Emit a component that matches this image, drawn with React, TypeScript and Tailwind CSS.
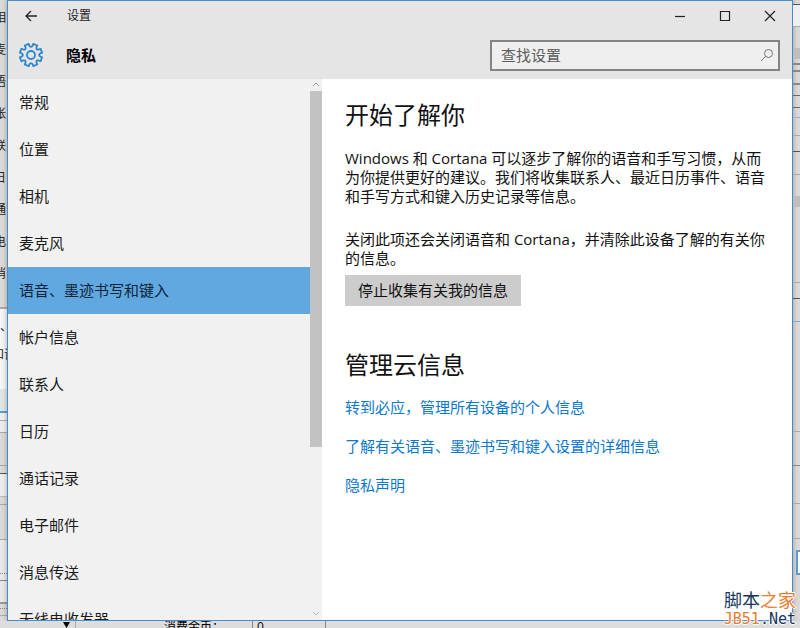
const navItems = [
  '常规',
  '位置',
  '相机',
  '麦克风',
  '语音、墨迹书写和键入',
  '帐户信息',
  '联系人',
  '日历',
  '通话记录',
  '电子邮件',
  '消息传送',
  '无线电收发器',
]

const links = [
  '转到必应，管理所有设备的个人信息',
  '了解有关语音、墨迹书写和键入设置的详细信息',
  '隐私声明',
]

const behindLabels = ['相', '麦', '语', '帐', '联', '日', '通', '电', '消']

// Rows of the window behind, visible on the left edge
const behindRowsLeft = [
  { id: 1, className: 'h-6 border-b-2 border-[#5b9bd5] bg-[#e2e5e5]' },
  { id: 2, className: 'h-2 border-b border-[#aaa] bg-[#eee]' },
  { id: 3, className: 'h-3 border-b border-[#aaa] bg-[#eee]' },
  { id: 4, className: 'h-[33px] border-b border-[#aaa]' },
  { id: 5, className: 'h-2 border-b border-[#555]' },
  { id: 6, className: 'h-[23px] border-b border-[#bbb] bg-[#eee]' },
  { id: 7, className: 'h-2 border-b border-[#aaa]' },
  { id: 8, className: 'h-[35px] border-b border-[#aaa]' },
  { id: 9, className: 'h-[34px] border-b border-dotted border-[#888] bg-[#e9e9e9]' },
  { id: 10, className: 'h-[7px] border-b border-[#888] bg-[#e9e9e9]' },
  { id: 11, className: 'h-[23px] border-b-2 border-[#999] bg-[#e9e9e9]' },
  { id: 12, className: 'h-[5px] border-b border-dotted border-[#888]' },
  { id: 13, className: 'h-[7px] border-b border-[#aaa]' },
]

// Rows of the window behind, visible on the right edge
const behindRows = [
  { id: 1, className: 'h-[5px] border-b border-[#555]' },
  { id: 2, className: 'h-[22px] border-b border-[#aaa] bg-[#eef0f4]' },
  { id: 3, className: 'h-[21px]' },
  { id: 4, className: 'h-[11px] bg-[#bebebe]' },
  { id: 5, className: 'h-[6px] border-b-2 border-[#888]' },
  { id: 6, className: 'h-[7px] border-b-2 border-[#888]' },
  { id: 7, className: 'h-[13px] border-b-2 border-[#888]' },
  { id: 8, className: 'h-[11px] border-b border-[#666]' },
  { id: 9, className: 'h-3 border-b border-[#666]' },
  { id: 10, className: 'h-[10px] border-b border-[#9ab4d0]' },
  { id: 11, className: 'h-[18px] border-b border-[#aaa]' },
  { id: 12, className: 'h-4 border-b border-[#555]' },
  { id: 13, className: 'h-[23px] border-b border-[#aaa]' },
  { id: 14, className: 'h-[21px]' },
  { id: 15, className: 'h-[11px] bg-[#bebebe]' },
  { id: 16, className: 'h-[76px] border-b border-[#aaa]' },
  { id: 17, className: 'h-4 border-b border-[#555]' },
  { id: 18, className: 'h-[23px] border-b border-[#8aa8c8]' },
  { id: 19, className: 'h-[110px] border-b border-[#aaa]' },
  { id: 20, className: 'h-[34px] border-b border-[#888]' },
  { id: 21, className: 'h-[38px] border-b border-[#aaa]' },
  { id: 22, className: 'h-[35px] border-b border-[#aaa]' },
]

function GearIcon() {
  const teeth = [0, 45, 90, 135, 180, 225, 270, 315]
  const point = (radius: number, deg: number) => {
    const a = (deg * Math.PI) / 180
    return `${(13 + radius * Math.sin(a)).toFixed(2)} ${(13 - radius * Math.cos(a)).toFixed(2)}`
  }
  const d = teeth
    .map((t, i) => {
      const c = t + 22.5
      return `${i === 0 ? 'M' : 'L'}${point(11.4, c - 11)} L${point(11.4, c + 11)} L${point(9.4, c + 13)} Q${point(7, c + 22.5)} ${point(9.4, c + 32)}`
    })
    .join(' ')

  return (
    <svg className="size-[26px]" viewBox="0 0 26 26" fill="none" stroke="#2b86cf" strokeWidth="1.8" strokeLinejoin="round">
      <path d={`${d} Z`} />
      <circle cx="13" cy="13" r="4" />
    </svg>
  )
}

function TitleBar() {
  return (
    <div className="flex h-[30px] items-center">
      <button aria-label="返回" className="flex h-full w-[46px] items-center justify-center">
        <svg className="h-3 w-3" viewBox="0 0 12 12" fill="none" stroke="#222" strokeWidth="1.3">
          <path d="M12 6H1M6 1L1 6l5 5" />
        </svg>
      </button>
      <span className="flex-1 pl-[13px] text-xs">设置</span>
      <button aria-label="最小化" className="flex h-full w-[45px] items-center justify-center">
        <svg className="h-3 w-3" viewBox="0 0 12 12" fill="none" stroke="#222" strokeWidth="1.2">
          <path d="M1 6.5h10" />
        </svg>
      </button>
      <button aria-label="最大化" className="flex h-full w-[45px] items-center justify-center">
        <svg className="h-3 w-3" viewBox="0 0 12 12" fill="none" stroke="#222" strokeWidth="1.2">
          <path d="M1.5 1.5h9v9h-9z" />
        </svg>
      </button>
      <button aria-label="关闭" className="flex h-full w-[45px] items-center justify-center">
        <svg className="h-3 w-3" viewBox="0 0 12 12" fill="none" stroke="#222" strokeWidth="1.2">
          <path d="M1 1l10 10M11 1L1 11" />
        </svg>
      </button>
    </div>
  )
}

function Header() {
  return (
    <header className="bg-[#e5e5e5]">
      <TitleBar />
      <div className="flex h-12 items-center pr-3 pl-[10px]">
        <GearIcon />
        <h1 className="flex-1 pl-[22px] text-[15px] font-bold text-black">隐私</h1>
        <label className="flex h-[31px] w-[290px] items-center border-2 border-[#848484] bg-[#efefef] pr-1">
          <input
            type="text"
            aria-label="查找设置"
            placeholder="查找设置"
            className="min-w-0 flex-1 bg-transparent pl-[9px] text-[15px] outline-none placeholder:text-[#5c5c5c]"
          />
          <svg className="h-[14px] w-[14px]" viewBox="0 0 14 14" fill="none" stroke="#777" strokeWidth="1">
            <circle cx="8.5" cy="5.5" r="4" />
            <path d="M5.7 8.3L1 13" />
          </svg>
        </label>
      </div>
    </header>
  )
}

function Sidebar() {
  return (
    <aside className="flex w-[314px] shrink-0 bg-[#f1f1f1]">
      <nav className="flex-1 overflow-hidden">
        {navItems.map((item, i) => (
          <a
            key={item}
            href="#"
            className={`flex h-[47px] items-center pl-[11px] text-[15px] ${i === 4 ? 'bg-[#61a8e1] text-[#0d2438]' : 'text-[#1a1a1a]'}`}
          >
            {item}
          </a>
        ))}
      </nav>
      <div className="flex w-3 flex-col items-center">
        <svg className="h-3 w-3 shrink-0" viewBox="0 0 12 12" fill="none" stroke="#999">
          <path d="M3 7l3-3 3 3" />
        </svg>
        <div className="h-[356px] w-full bg-[#c2c2c2]" />
        <svg className="mt-auto h-3 w-3 shrink-0" viewBox="0 0 12 12" fill="none" stroke="#bbb">
          <path d="M3 4l3 3 3-3" />
        </svg>
      </div>
    </aside>
  )
}

function Content() {
  return (
    <main className="min-w-0 flex-1 bg-white pt-5 pr-6 pl-[23px] text-[15px] text-[#111]">
      <h2 className="text-2xl">开始了解你</h2>
      <p className="mt-[18px] -mr-3 leading-[19px]">
        Windows 和 Cortana 可以逐步了解你的语音和手写习惯，从而
        <br />
        为你提供更好的建议。我们将收集联系人、最近日历事件、语音
        <br />
        和手写方式和键入历史记录等信息。
      </p>
      <p className="mt-6 -mr-3 leading-[19px]">
        关闭此项还会关闭语音和 Cortana，并清除此设备了解的有关你
        <br />
        的信息。
      </p>
      <button className="mt-[7px] h-[31px] bg-[#cccccc] px-[13px]">停止收集有关我的信息</button>
      <h2 className="mt-[43px] text-2xl">管理云信息</h2>
      <ul className="mt-[7px]">
        {links.map(link => (
          <li key={link} className="flex h-[39px] items-center">
            <a href="#" className="text-[#0b78d0]">{link}</a>
          </li>
        ))}
      </ul>
    </main>
  )
}

function App() {
  return (
    <div className="relative flex h-screen flex-col overflow-hidden bg-[#dcdad8] font-['Open_Sans','Noto_Sans_CJK_SC',sans-serif] text-[#222]">
      <div className="flex min-h-0 flex-1">
        <div className="flex w-[7px] shrink-0 flex-col overflow-hidden text-xs">
          <div className="pt-[2px]">
            {behindLabels.map(label => (
              <div key={label} className="-ml-[6px] h-8 w-4 leading-8">{label}</div>
            ))}
          </div>
          <div className="h-[19px] border-b-2 border-[#aaa]" />
          <div className="h-[80px] bg-[#f4f5f7] pt-1">
            <div className="h-7 leading-7">、</div>
            <div className="-ml-[8px] w-8 leading-7">和语</div>
          </div>
          {behindRowsLeft.map(row => (
            <div key={row.id} className={`shrink-0 ${row.className}`} />
          ))}
        </div>

        <div className="flex min-w-0 flex-1 flex-col border border-[#4a8cc7] shadow-[0_0_5px_rgba(0,0,0,0.3)]">
          <Header />
          <div className="flex min-h-0 flex-1">
            <Sidebar />
            <Content />
          </div>
        </div>

        <div className="w-[7px] shrink-0 overflow-hidden">
          {behindRows.map(row => (
            <div key={row.id} className={row.className} />
          ))}
          <div className="mt-[11px] ml-[3px] h-[25px] border-2 border-r-0 border-[#5b9bd5] bg-white" />
        </div>
      </div>

      <div className="flex h-[7px] shrink-0 items-start overflow-hidden bg-[#dddddd] text-xs leading-3 text-black">
        <div className="h-full w-[76px] border-r border-[#aaa] pl-[63px]">
          <svg className="h-[7px] w-[7px]" viewBox="0 0 7 7" fill="black">
            <path d="M0 1h7L3.5 7z" />
          </svg>
        </div>
        <span className="pl-[88px]">消费金币：</span>
        <span className="ml-[28px] w-[74px] border-x border-[#888] pl-1">0</span>
      </div>

      <div className="absolute right-1 bottom-0 text-right text-shadow-[1px_0_0_white,-1px_0_0_white,0_1px_0_white,0_-1px_0_white]">
        <div className="text-lg leading-5 text-[#16365e]">
          脚本<span className="text-[#ee7b30]">之家</span>
        </div>
        <div className="font-['DejaVu_Sans_Mono',monospace] text-[15px] leading-[18px] text-[#16365e]">
          <span className="text-[#ee7b30]">JB51</span>.Net
        </div>
      </div>
    </div>
  )
}

export default App
